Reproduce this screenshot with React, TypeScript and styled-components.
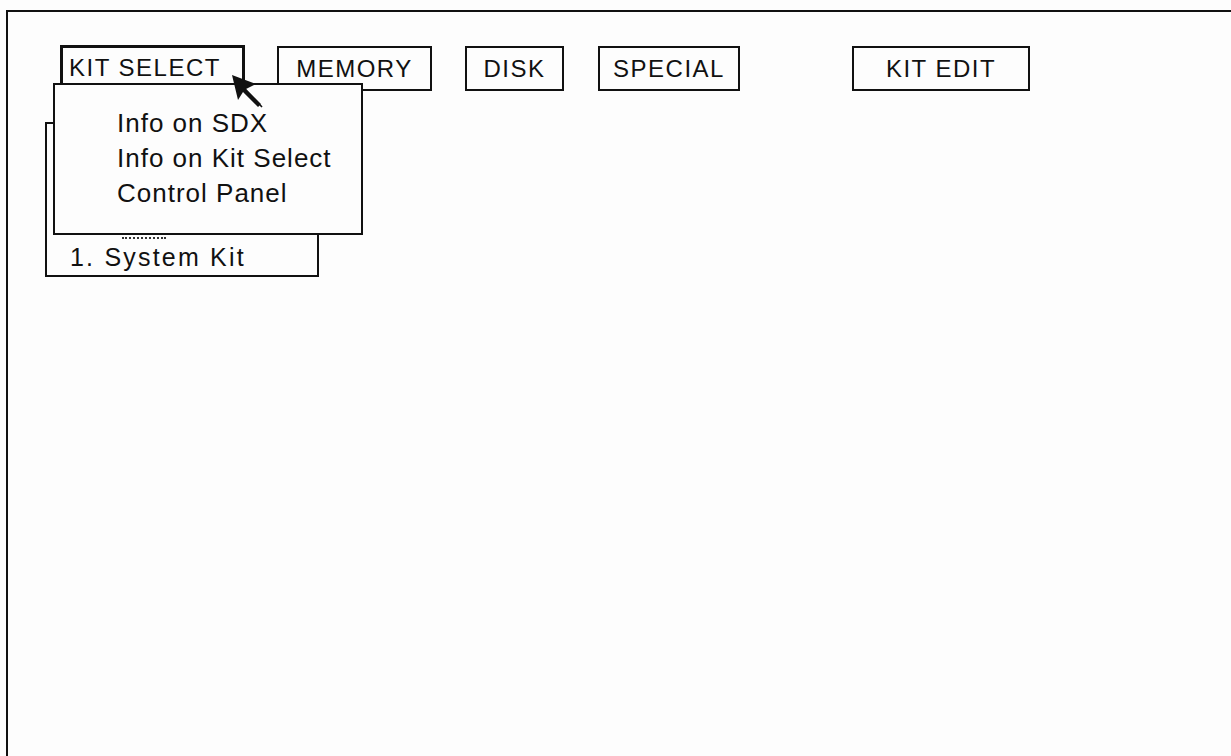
import styled, { createGlobalStyle } from "styled-components";

const GlobalStyle = createGlobalStyle`
    html, body {
        margin: 0;
        padding: 0;
        background: #fdfdfd;
    }
    body {
        font-family: "Liberation Sans", Arial, sans-serif;
        color: #111;
    }
`;

type Tab = {
    label: string;
    width: number;
    offset: number;
};

const tabs: Tab[] = [
    { label: "MEMORY", width: 155, offset: 32 },
    { label: "DISK", width: 99, offset: 33 },
    { label: "SPECIAL", width: 142, offset: 34 },
    { label: "KIT EDIT", width: 178, offset: 112 },
];

const menuItems = ["Info on SDX", "Info on Kit Select", "Control Panel"];

const Arrow = () => (
    <svg width="40" height="40" viewBox="0 0 40 40">
        <path d="M3 2 L9 27 L14 19 L29 34 L32 31 L17 16 L27 11 Z" fill="#111" />
        <path d="M16 16 L33 34" stroke="#111" strokeWidth="1.6" />
    </svg>
);

export default function App() {
    return (
        <>
            <GlobalStyle />
            <Screen>
                <Frame>
                    <Toolbar>
                        <MenuAnchor>
                            <TabButton $width={185} $active>KIT SELECT</TabButton>
                            <Dropdown>
                                {menuItems.map((item) => (
                                    <MenuItem key={item}>{item}</MenuItem>
                                ))}
                            </Dropdown>
                            <Cursor>
                                <Arrow />
                            </Cursor>
                        </MenuAnchor>
                        {tabs.map((tab) => (
                            <TabButton key={tab.label} $width={tab.width} $offset={tab.offset}>
                                {tab.label}
                            </TabButton>
                        ))}
                    </Toolbar>
                    <KitWindow>
                        <HiddenRow />
                        <KitRow>1. System Kit</KitRow>
                    </KitWindow>
                </Frame>
            </Screen>
        </>
    );
}

const Screen = styled.div`
    width: 1231px;
    height: 756px;
    overflow: hidden;
    background: #fdfdfd;
`;

const Frame = styled.div`
    margin: 10px 0 0 6px;
    height: 746px;
    border-top: 2px solid #111;
    border-left: 2px solid #111;
    box-sizing: border-box;
    padding: 33px 0 0 52px;
`;

const Toolbar = styled.div`
    display: flex;
    align-items: flex-start;
`;

const MenuAnchor = styled.div`
    position: relative;
    z-index: 2;
`;

const TabButton = styled.div<{ $width: number; $offset?: number; $active?: boolean }>`
    box-sizing: border-box;
    width: ${(p) => p.$width}px;
    height: ${(p) => (p.$active ? 46 : 45)}px;
    margin-left: ${(p) => p.$offset ?? 0}px;
    margin-top: ${(p) => (p.$active ? 0 : 1)}px;
    border: ${(p) => (p.$active ? 3 : 2)}px solid #111;
    display: flex;
    align-items: center;
    justify-content: ${(p) => (p.$active ? "flex-start" : "center")};
    padding-left: ${(p) => (p.$active ? 6 : 0)}px;
    font-size: 24px;
    letter-spacing: 1.5px;
    line-height: 1;
    background: #fdfdfd;
`;

const Dropdown = styled.div`
    position: absolute;
    left: -7px;
    top: 38px;
    width: 310px;
    height: 152px;
    box-sizing: border-box;
    border: 2px solid #111;
    background: #fdfdfd;
    padding: 21px 0 0 62px;
    display: flex;
    flex-direction: column;
`;

const MenuItem = styled.div`
    font-size: 26px;
    letter-spacing: 1px;
    line-height: 35px;
    white-space: nowrap;
`;

const Cursor = styled.div`
    position: absolute;
    left: 169px;
    top: 28px;
    width: 40px;
    height: 40px;
`;

const KitWindow = styled.div`
    margin: 31px 0 0 -15px;
    width: 274px;
    height: 155px;
    box-sizing: border-box;
    border: 2px solid #111;
    display: flex;
    flex-direction: column;
    justify-content: flex-end;
    padding: 0 0 3px 23px;
`;

const HiddenRow = styled.div`
    margin-left: 52px;
    width: 44px;
    border-top: 2px dotted #333;
    margin-bottom: 3px;
`;

const KitRow = styled.div`
    font-size: 25px;
    letter-spacing: 2.2px;
    line-height: 30px;
    white-space: nowrap;
`;
